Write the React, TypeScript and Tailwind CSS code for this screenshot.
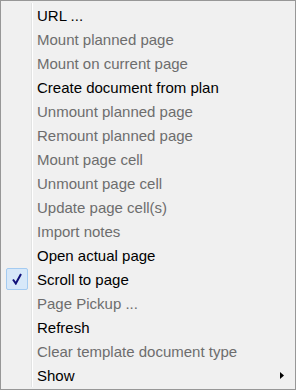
const items: { label: string; disabled?: boolean; checked?: boolean; submenu?: boolean }[] = [
  { label: 'URL ...' },
  { label: 'Mount planned page', disabled: true },
  { label: 'Mount on current page', disabled: true },
  { label: 'Create document from plan' },
  { label: 'Unmount planned page', disabled: true },
  { label: 'Remount planned page', disabled: true },
  { label: 'Mount page cell', disabled: true },
  { label: 'Unmount page cell', disabled: true },
  { label: 'Update page cell(s)', disabled: true },
  { label: 'Import notes', disabled: true },
  { label: 'Open actual page' },
  { label: 'Scroll to page', checked: true },
  { label: 'Page Pickup ...', disabled: true },
  { label: 'Refresh' },
  { label: 'Clear template document type', disabled: true },
  { label: 'Show', submenu: true },
]

export default function App() {
  return (
    <div className="w-[296px] h-[390px] bg-[#f0f0f0] border border-[#979797] py-[2px] font-['Liberation_Sans',sans-serif] text-[15px] relative">
      {/* gutter line */}
      <div className="absolute top-[2px] bottom-[2px] left-[30px] w-px bg-[#e2e3e3]" />
      <div className="absolute top-[2px] bottom-[2px] left-[31px] w-px bg-white" />
      {items.map((item) => (
        <div key={item.label} className="h-6 flex items-center relative">
          <div className="w-[36px] h-6 shrink-0 flex items-center justify-center">
            {item.checked && (
              <div className="ml-[-4px] w-[22px] h-[22px] bg-[#d7e8f9] border border-[#a4cbf1] rounded-[2px] flex items-center justify-center">
                <svg width="10" height="12" viewBox="0 0 10 12">
                  <path d="M1 6.5 L3.8 10.5 L9 1" fill="none" stroke="#10107a" strokeWidth="2" />
                </svg>
              </div>
            )}
          </div>
          <span className={`pt-[2px] ${item.disabled ? 'text-[#6d6d6d]' : 'text-black'}`}>{item.label}</span>
          {item.submenu && (
            <svg className="absolute right-[11px] top-[9px]" width="4" height="7" viewBox="0 0 4 7">
              <path d="M0 0 L4 3.5 L0 7 Z" fill="#000" />
            </svg>
          )}
        </div>
      ))}
    </div>
  )
}
